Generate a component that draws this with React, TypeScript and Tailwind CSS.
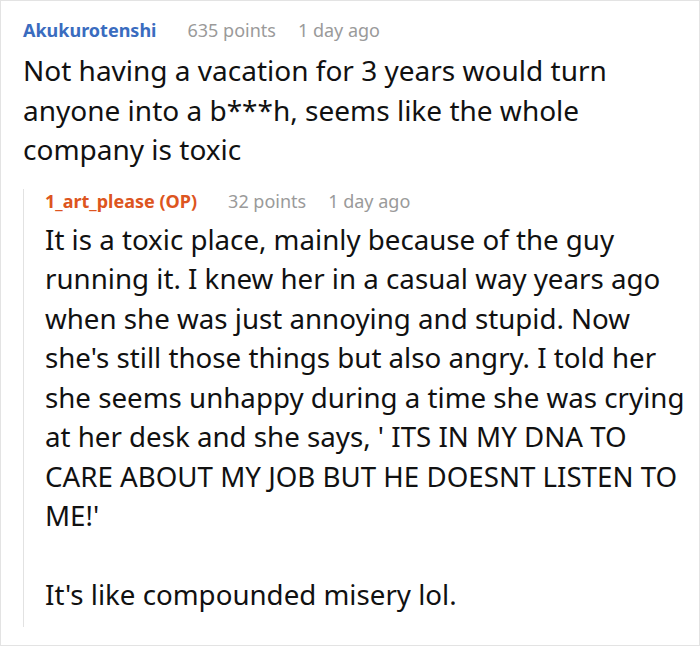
export default function App() {
  return (
    <div
      className="w-[700px] h-[646px] bg-white border border-[#e3e3e3] overflow-hidden"
      style={{ fontFamily: '"Noto Sans", "Open Sans", sans-serif' }}
    >
      <div className="pl-[22px] pr-[6px] pt-[17px]">
        <div className="flex items-baseline text-[18px] leading-[24px]">
          <span className="font-bold text-[#3a6cbf]">Akukurotenshi</span>
          <span className="ml-[31px] text-[#9a9a9a]">635 points</span>
          <span className="ml-[22px] text-[#9a9a9a]">1 day ago</span>
        </div>
        <p className="mt-[9px] text-[28px] leading-[39.5px] text-[#111] whitespace-nowrap">
          Not having a vacation for 3 years would turn
          <br />
          anyone into a b***h, seems like the whole
          <br />
          company is toxic
        </p>
        <div className="mt-[19px] border-l border-[#e2e2e2] pl-[21px] pb-[12px]">
          <div className="flex items-baseline text-[18px] leading-[24px]">
            <span className="font-bold text-[#dd5520]">1_art_please (OP)</span>
            <span className="ml-[31px] text-[#9a9a9a]">32 points</span>
            <span className="ml-[22px] text-[#9a9a9a]">1 day ago</span>
          </div>
          <p className="mt-[7px] text-[27.7px] leading-[39.5px] text-[#111] whitespace-nowrap">
            It is a toxic place, mainly because of the guy
            <br />
            running it. I knew her in a casual way years ago
            <br />
            when she was just annoying and stupid. Now
            <br />
            she's still those things but also angry. I told her
            <br />
            she seems unhappy during a time she was crying
            <br />
            at her desk and she says, ' ITS IN MY DNA TO
            <br />
            CARE ABOUT MY JOB BUT HE DOESNT LISTEN TO
            <br />
            ME!'
          </p>
          <p className="mt-[39.5px] text-[27.7px] leading-[39.5px] text-[#111]">
            It's like compounded misery lol.
          </p>
        </div>
      </div>
    </div>
  );
}
